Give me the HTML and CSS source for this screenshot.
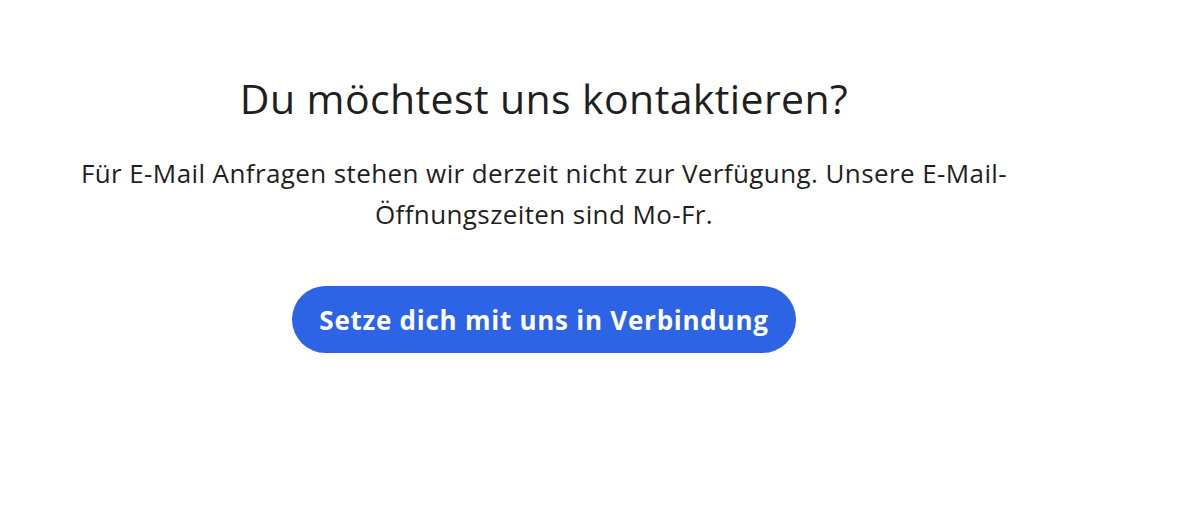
FILE: index.html
```html
<!DOCTYPE html>
<html lang="de">
<head>
<meta charset="utf-8">
<title>Kontakt</title>
<link rel="stylesheet" href="styles.css">
</head>
<body>
<main class="page">
  <section class="contact">
    <h1 class="contact-title">Du möchtest uns kontaktieren?</h1>
    <p class="contact-text">Für E-Mail Anfragen stehen wir derzeit nicht zur Verfügung. Unsere E-Mail-Öffnungszeiten sind Mo-Fr.</p>
    <a class="contact-button" href="#">Setze dich mit uns in Verbindung</a>
  </section>
</main>
</body>
</html>
```
FILE: styles.css
```css
html, body {
  margin: 0;
  padding: 0;
  background: #ffffff;
}
body {
  font-family: "Open Sans", "Noto Sans", sans-serif;
  color: #1f1f1f;
}
.page {
  width: 1088px;
}
.contact {
  display: flex;
  flex-direction: column;
  align-items: center;
  text-align: center;
  padding: 74px 40px 0;
}
.contact-title {
  margin: 0;
  font-size: 41px;
  line-height: 48px;
  letter-spacing: 0.4px;
  font-weight: 400;
}
.contact-text {
  margin: 31px 0 0;
  font-size: 26px;
  line-height: 41px;
  letter-spacing: 0.4px;
  font-weight: 400;
  max-width: 960px;
}
.contact-button {
  margin-top: 51px;
  display: inline-flex;
  align-items: center;
  justify-content: center;
  height: 67px;
  padding: 0 27px;
  border-radius: 34px;
  background: #2d64e5;
  color: #ffffff;
  font-size: 26px;
  letter-spacing: 0.75px;
  font-weight: 700;
  text-decoration: none;
}
```
